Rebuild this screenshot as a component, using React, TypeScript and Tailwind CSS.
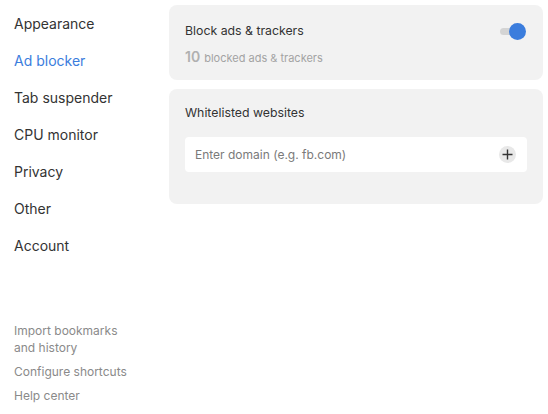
import { useState } from 'react';

const navItems = ['Appearance', 'Ad blocker', 'Tab suspender', 'CPU monitor', 'Privacy', 'Other', 'Account'];

function Toggle({ on }: { on: boolean }) {
  return (
    <div className="relative w-[29px] h-[18px] flex items-center">
      <div className="absolute left-[2px] right-[7px] h-[7px] rounded-full bg-[#d4d4d4]" />
      <div
        className={`absolute w-[17px] h-[17px] rounded-full ${on ? 'right-[1px] bg-[#3b7ddd]' : 'left-0 bg-white'}`}
      />
    </div>
  );
}

export default function App() {
  const [active] = useState('Ad blocker');
  const [domain, setDomain] = useState('');

  return (
    <div className="w-[548px] h-[414px] flex bg-white text-[#333] font-['Inter',sans-serif] overflow-hidden">
      <aside className="w-[169px] shrink-0 flex flex-col justify-between pt-[5px] pb-[10px] pl-[14px]">
        <nav className="flex flex-col">
          {navItems.map((item) => (
            <div
              key={item}
              className={`h-[37px] flex items-center text-[14px] ${item === active ? 'text-[#3b7ddd]' : 'text-[#333]'}`}
            >
              {item}
            </div>
          ))}
        </nav>
        <div className="flex flex-col gap-[7px] text-[12px] leading-[17px] text-[#8a8a8a]">
          <div>
            Import bookmarks
            <br />
            and history
          </div>
          <div>Configure shortcuts</div>
          <div>Help center</div>
        </div>
      </aside>

      <main className="flex-1 flex flex-col gap-[9px] pt-[5px] pr-[5px]">
        <section className="h-[75px] rounded-lg bg-[#f2f2f2] px-4 pt-[17px]">
          <div className="flex items-center justify-between">
            <span className="text-[12.3px] leading-[18px]">Block ads &amp; trackers</span>
            <Toggle on />
          </div>
          <div className="mt-[6px] flex items-baseline gap-[4px]">
            <span className="text-[14px] font-semibold text-[#b0b0b0]">10</span>
            <span className="text-[11px] text-[#a3a3a3]">blocked ads &amp; trackers</span>
          </div>
        </section>

        <section className="rounded-lg bg-[#f2f2f2] px-4 pt-[15px] pb-[32px]">
          <div className="text-[12.3px] leading-[18px]">Whitelisted websites</div>
          <div className="mt-[15px] h-[35px] rounded bg-white flex items-center pl-[10px] pr-[11px]">
            <input
              value={domain}
              onChange={(e) => setDomain(e.target.value)}
              placeholder="Enter domain (e.g. fb.com)"
              className="flex-1 bg-transparent outline-none text-[12px] text-[#333] placeholder:text-[#7a7a7a]"
            />
            <button className="w-[17px] h-[17px] rounded-full bg-[#e8e8e8] flex items-center justify-center">
              <svg width="11" height="11" viewBox="0 0 11 11" fill="none" stroke="#333" strokeWidth="1.4">
                <path d="M5.5 0.5v10M0.5 5.5h10" />
              </svg>
            </button>
          </div>
        </section>
      </main>
    </div>
  );
}
